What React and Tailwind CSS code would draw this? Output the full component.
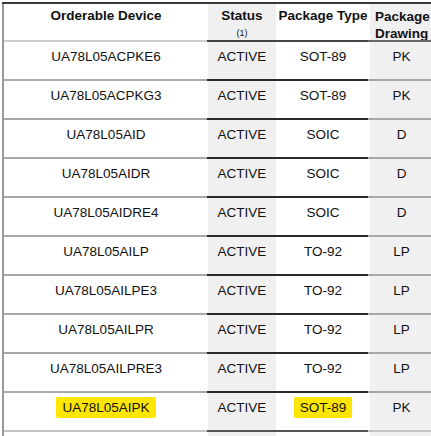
import React from 'react'

const rows = [
    { device: 'UA78L05ACPKE6', pkg: 'SOT-89', drawing: 'PK' },
    { device: 'UA78L05ACPKG3', pkg: 'SOT-89', drawing: 'PK' },
    { device: 'UA78L05AID', pkg: 'SOIC', drawing: 'D' },
    { device: 'UA78L05AIDR', pkg: 'SOIC', drawing: 'D' },
    { device: 'UA78L05AIDRE4', pkg: 'SOIC', drawing: 'D' },
    { device: 'UA78L05AILP', pkg: 'TO-92', drawing: 'LP' },
    { device: 'UA78L05AILPE3', pkg: 'TO-92', drawing: 'LP' },
    { device: 'UA78L05AILPR', pkg: 'TO-92', drawing: 'LP' },
    { device: 'UA78L05AILPRE3', pkg: 'TO-92', drawing: 'LP' },
    { device: 'UA78L05AIPK', pkg: 'SOT-89', drawing: 'PK', mark: true },
]

const cols = 'grid grid-cols-[204px_68px_94px_74px]'

const App = () => {
    return (
        <div className='w-[431px] h-[436px] overflow-hidden bg-white pl-[2px] text-[#111] text-[13.5px] leading-[16px]' style={{ fontFamily: '"Liberation Sans", Arial, sans-serif' }}>
            <div className='h-[2px]' />
            <div className='h-[2px] bg-[#3a3a3a]' />
            <div className='w-[440px] border-l-2 border-l-[#999]'>
                <div className={`${cols} h-[36px] font-bold`}>
                    <div className='text-center pt-[4px]'>Orderable Device</div>
                    <div className='bg-[#f0f0f0] flex flex-col items-center pt-[4px]'>
                        <span>Status</span>
                        <span className='text-[9px] font-normal leading-[12px] mt-[3px]'>(1)</span>
                    </div>
                    <div className='text-center pt-[4px]'>Package Type</div>
                    <div className='bg-[#f0f0f0] pt-[4px] pl-[5px] leading-[17px]'>Package<br />Drawing</div>
                </div>
                <div className='flex h-[2px]'>
                    <div className='w-[204px] bg-[#cfcfcf]' />
                    <div className='w-[162px] bg-[#444]' />
                    <div className='w-[74px] bg-[#666]' />
                </div>
                {rows.map((r, i) => (
                    <div key={r.device}>
                        {i > 0 && (
                            <div className='flex h-[2px]'>
                                <div className='w-[204px] bg-[#a8a8a8]' />
                                <div className='w-[162px] bg-[#2a2a2a]' />
                                <div className='w-[74px] bg-[#a8a8a8]' />
                            </div>
                        )}
                        <div className={`${cols} h-[37px]`}>
                            <div className='text-center pt-[7px]'>
                                <span className={r.mark ? 'bg-[#ffe600] px-[6px] py-[3px] rounded-[2px]' : ''}>{r.device}</span>
                            </div>
                            <div className='bg-[#f0f0f0] text-center pt-[7px]'>ACTIVE</div>
                            <div className='text-center pt-[7px]'>
                                <span className={r.mark ? 'bg-[#ffe600] px-[6px] py-[3px] rounded-[2px]' : ''}>{r.pkg}</span>
                            </div>
                            <div className='bg-[#f0f0f0] pt-[7px]'>
                                <div className='w-[63px] text-center'>{r.drawing}</div>
                            </div>
                        </div>
                    </div>
                ))}
                <div className='flex h-[2px]'>
                    <div className='w-[204px] bg-[#c4c4c4]' />
                    <div className='w-[162px] bg-[#555]' />
                    <div className='w-[74px] bg-[#c4c4c4]' />
                </div>
                <div className={`${cols} h-[4px]`}>
                    <div />
                    <div className='bg-[#f0f0f0]' />
                    <div />
                    <div className='bg-[#f0f0f0]' />
                </div>
            </div>
        </div>
    )
}

export default App
